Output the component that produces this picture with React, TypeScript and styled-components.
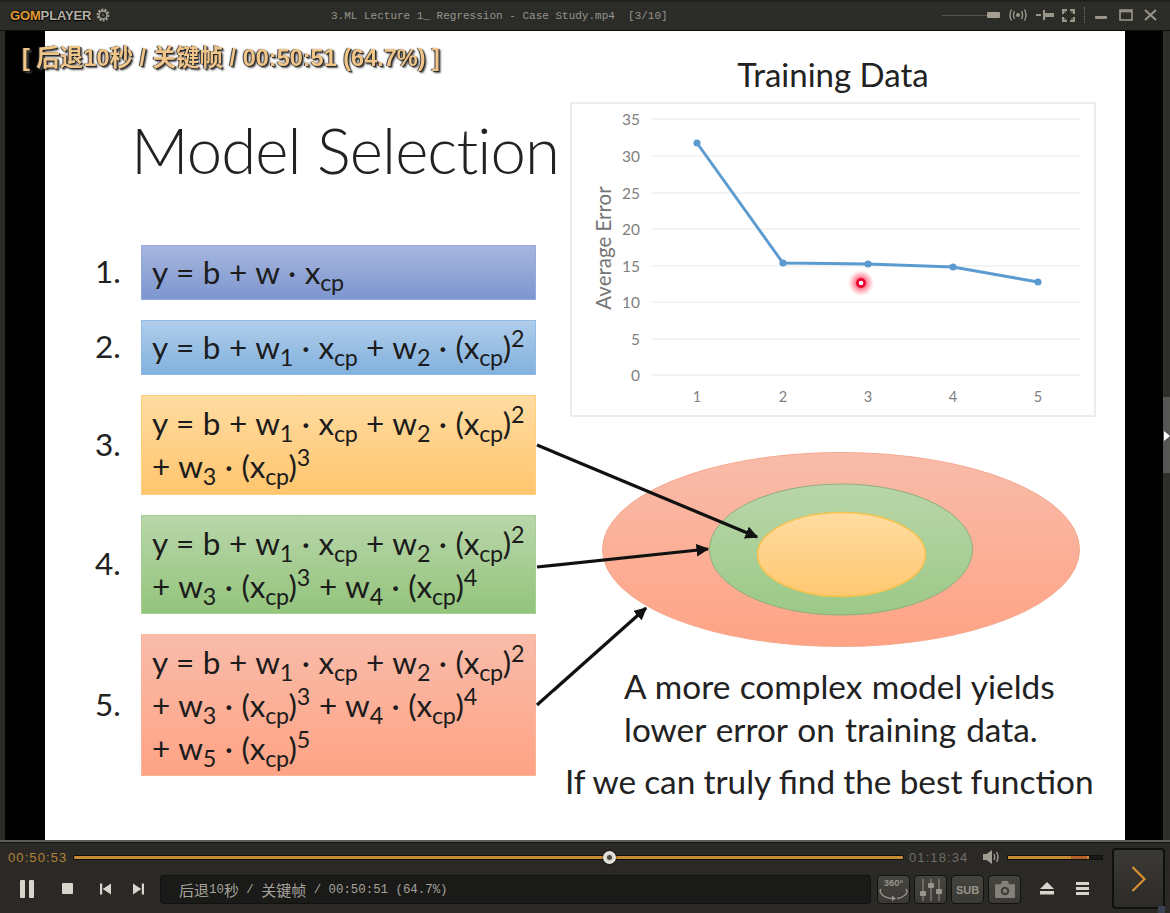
import React from "react";
import styled, { createGlobalStyle } from "styled-components";

const Global = createGlobalStyle`
  html, body { margin: 0; padding: 0; background: #2a2a26; }
  #root { width: 1170px; height: 913px; overflow: hidden; }
`;

const Window = styled.div`
  width: 1170px; height: 913px; display: flex; flex-direction: column;
  background: #2a2a26; position: relative; overflow: hidden;
  font-family: "Liberation Sans", "Noto Sans CJK SC", sans-serif;
`;

/* ---------- title bar ---------- */
const TitleBar = styled.header`
  height: 30px; flex: none; display: flex; align-items: center; padding: 0 13px 0 10px;
  background: linear-gradient(#1d1d1b 0, #2c2c28 3px, #2b2b27 100%);
  border-bottom: 1px solid #0c0c0b; box-sizing: content-box;
`;
const Logo = styled.div`
  width: 321px; display: flex; align-items: center; gap: 5px; flex: none;
  font: bold 13px "Liberation Sans", sans-serif; letter-spacing: -0.15px; color: #b5b0a5;
  text-shadow: 0 0 2px #000, 0 1px 1px #000;
  b { color: #e39a33; }
`;
const Title = styled.div`
  flex: 1; font: 11px "Liberation Mono", "Noto Sans CJK SC", monospace; color: #96948e; white-space: pre; padding-top: 2px;
`;
const TitleTools = styled.div`display: flex; align-items: center; gap: 8px; color: #9b968a;`;
const WinSlider = styled.div`
  width: 58px; height: 6px; display: flex; align-items: center;
  &::before { content: ""; flex: 1; height: 1px; background: #55534d; }
  &::after { content: ""; width: 13px; height: 6px; background: #a59f92; border-radius: 1px; }
`;
const Dots = styled.div`width: 0; height: 16px; border-left: 1px dotted #77736a; margin: 0 1px 0 1px;`;
const WinButtons = styled.div`display: flex; align-items: center; gap: 11px;`;

/* ---------- video ---------- */
const VideoRow = styled.main`flex: 1; min-height: 0; display: flex; padding-left: 5px;`;
const Video = styled.div`flex: 1; background: #000; display: flex; justify-content: center;`;
const Slide = styled.div`
  width: 1080px; background: #fff; display: flex; position: relative; margin-left: 2px;
  color: #1c1c1c; font-family: Lato, "Liberation Sans", sans-serif; filter: blur(0.4px);
`;
const RightEdge = styled.div`
  width: 7px; flex: none; background: #2e2e2a; display: flex; flex-direction: column; padding-top: 366px;
  position: relative; box-sizing: border-box;
`;
const EdgeThumb = styled.div`height: 76px; background: #565654;`;
const Cursor = styled.svg`position: absolute; right: 0; top: 400px;`;
const Osd = styled.div`
  position: absolute; left: -23px; top: 8px; white-space: pre; z-index: 1;
  font: bold 23.5px "Liberation Sans", "Noto Sans CJK SC", sans-serif; color: #f0c58a;
  text-shadow: 1px 1px 1px #222, -1px 0 1px #333, 2px 2px 2px #555;
`;

const LeftCol = styled.section`width: 520px; flex: none; padding-left: 50px; box-sizing: border-box;`;
const SlideTitle = styled.h1`
  margin: 84px 0 60px 36px; font: 300 63.5px/70px Lato, sans-serif; letter-spacing: -0.9px; color: #222; white-space: nowrap;
`;
const Models = styled.div`display: flex; flex-direction: column; gap: 20px;`;
const ModelRow = styled.div`display: flex; align-items: center;`;
const Num = styled.div`width: 46px; font-size: 31.5px; flex: none; color: #222; margin-top: -3px;`;
const Box = styled.div<{ $h: number; $top: string; $bottom: string; $edge: string }>`
  width: 395px; height: ${p => p.$h}px; flex: none; box-sizing: border-box; padding-left: 10px;
  display: flex; flex-direction: column; justify-content: center;
  background: linear-gradient(${p => p.$top}, ${p => p.$bottom}); border: 1px solid ${p => p.$edge};
`;
const FLine = styled.div`font-size: 31.5px; line-height: 43px; height: 43px; white-space: pre; letter-spacing: -0.15px; word-spacing: 0.8px;`;
const Sub = styled.sub`font-size: 0.74em; line-height: 0; vertical-align: -0.32em; letter-spacing: -0.4px;`;
const Sup = styled.sup`font-size: 0.74em; line-height: 0; vertical-align: 0.52em;`;

const RightCol = styled.section`flex: 1; padding-top: 23px; display: flex; flex-direction: column; align-items: flex-start;`;
const ChartHeading = styled.h2`
  margin: 0 0 8px 5px; width: 526px; text-align: center; font: 400 33px/40px Lato, sans-serif; color: #222;
`;
const ChartPanel = styled.div`
  margin-left: 5px; width: 526px; height: 315px; box-sizing: border-box; border: 2px solid #ececec; background: #fff;
  svg { display: block; margin: -2px; }
`;
const Diagram = styled.svg`margin: 35px 0 18px 36px; display: block; flex: none;`;
const Caption = styled.p<{ $left: number; $gap?: number; $ws: number }>`
  margin: ${p => p.$gap ?? 0}px 0 0 ${p => p.$left}px; font-size: 33.4px; line-height: 43px; white-space: nowrap; color: #222;
  word-spacing: ${p => p.$ws}px;
`;
const Arrows = styled.svg`position: absolute; inset: 0; pointer-events: none;`;

/* ---------- controls ---------- */
const Controls = styled.footer`
  height: 73px; flex: none; display: flex; box-sizing: border-box; padding: 4px 5px 5px 8px; gap: 9px; position: relative;
  background: #2a2925; border-top: 2px solid #5a5a56; box-shadow: inset 0 1px 0 #111;
`;
const Main = styled.div`flex: 1; min-width: 0; display: flex; flex-direction: column;`;
const SeekRow = styled.div`height: 22px; display: flex; align-items: center; margin-bottom: 7px;`;
const Time = styled.span<{ $c: string }>`
  font: 13px "Liberation Sans", sans-serif; letter-spacing: 1.1px; color: ${p => p.$c}; flex: none; width: 65px;
`;
const Track = styled.div`
  flex: 1; height: 3px; background: #c98a35; border: 1px solid #0f0f0e; border-radius: 2px; position: relative; margin-right: 5px;
`;
const Thumb = styled.div`
  position: absolute; top: -5px; width: 9px; height: 9px; margin-left: -6px; border-radius: 50%;
  background: #d9d6cf; border: 2px solid #e8e6e0; box-sizing: content-box; box-shadow: 0 0 2px #000;
  &::after { content: ""; display: block; width: 5px; height: 5px; margin: 2px; border-radius: 50%; background: #4a4a46; }
`;
const VolIcon = styled.svg`flex: none; margin: 0 7px 0 9px;`;
const VolTrack = styled.div`
  width: 96px; flex: none; background: linear-gradient(90deg, #c98a35 0 67%, #b4622a 67% 84%, #c98a35 84% 86%, #181816 86%);
  border: 1px solid #0f0f0e; box-sizing: border-box; height: 5px;
`;
const ButtonRow = styled.div`height: 29px; display: flex; align-items: center; color: #d8d5cc;`;
const Transport = styled.div`width: 152px; flex: none; display: flex; align-items: center; padding: 0 0 2px 12px; box-sizing: border-box; gap: 27px;`;
const SkipPair = styled.div`display: flex; align-items: center; gap: 22px;`;
const Status = styled.div`
  width: 711px; height: 29px; flex: none; box-sizing: border-box; padding-left: 18px; display: flex; align-items: center;
  background: #1a1a18; border: 1px solid #111; border-radius: 3px; color: #a5a39b;
  font: 12.4px "Liberation Mono", monospace; white-space: pre;
`;
const Cjk = styled.span`font: 15px "Noto Sans CJK SC", sans-serif;`;
const Tools = styled.div`display: flex; margin-left: 6px; gap: 4px;`;
const ToolButton = styled.div`
  width: 33px; height: 29px; box-sizing: border-box; border: 1px solid #121211; border-radius: 4px; background: linear-gradient(#45443f, #3a3935);
  display: flex; flex-direction: column; align-items: center; justify-content: center; color: #98948a; position: relative;
`;
const TinyLabel = styled.span<{ $size: number }>`font: bold ${p => p.$size}px/10px "Liberation Sans", sans-serif;`;
const RightIcons = styled.div`display: flex; align-items: center; gap: 22px; margin: 0 0 2px 19px;`;
const NextButton = styled.div`
  width: 53px; height: 61px; flex: none; box-sizing: border-box; border: 2px solid #0f0f0e; border-radius: 4px; align-self: flex-start;
  background: linear-gradient(#3a3934, #2c2b27); display: flex; align-items: center; justify-content: center; margin-top: 2px;
`;
const Corner = styled.div`position: absolute; right: 5px; bottom: 0; width: 7px; height: 7px; background: #3a4252;`;

/* ---------- slide data ---------- */
const L1 = <>y = b + w · x<Sub>cp</Sub></>;
const L2 = <>y = b + w<Sub>1</Sub> · x<Sub>cp</Sub> + w<Sub>2</Sub> · (x<Sub>cp</Sub>)<Sup>2</Sup></>;
const W3 = <>+ w<Sub>3</Sub> · (x<Sub>cp</Sub>)<Sup>3</Sup></>;
const W4 = <>{W3} + w<Sub>4</Sub> · (x<Sub>cp</Sub>)<Sup>4</Sup></>;
const W5 = <>+ w<Sub>5</Sub> · (x<Sub>cp</Sub>)<Sup>5</Sup></>;

const models = [
  { n: "1.", h: 55, top: "#a7b6de", bottom: "#7d96cf", edge: "#93abdc", lines: [L1] },
  { n: "2.", h: 55, top: "#b0cdea", bottom: "#82b1de", edge: "#8fbae3", lines: [L2] },
  { n: "3.", h: 100, top: "#ffdca1", bottom: "#ffc56e", edge: "#ffcf80", lines: [L2, W3] },
  { n: "4.", h: 99, top: "#b9d6aa", bottom: "#93c47c", edge: "#a6cf94", lines: [L2, W4] },
  { n: "5.", h: 142, top: "#f8bcaa", bottom: "#ffa385", edge: "#fbb49c", lines: [L2, W4, W5] },
];

const gridY = [[35, 119], [30, 156], [25, 193], [20, 229], [15, 266], [10, 302], [5, 339], [0, 375]];
const pts = [[697, 143], [783, 263], [868, 264], [953, 267], [1038, 282]];

const Chart = () => (
  <svg width={526} height={315} viewBox="570 102 526 315">
    <defs>
      <radialGradient id="glow">
        <stop offset="0.35" stopColor="#ff3b5c" stopOpacity="0.75" />
        <stop offset="1" stopColor="#ff6b80" stopOpacity="0" />
      </radialGradient>
    </defs>
    {gridY.map(([v, y]) => (
      <g key={v}>
        <line x1={651} x2={1081} y1={y} y2={y} stroke="#e9e9e9" strokeWidth={1.2} />
        <text x={640} y={y + 5.5} textAnchor="end" fontSize={15.5} fill="#7f7f7f" fontFamily="Lato, sans-serif">{v}</text>
      </g>
    ))}
    {pts.map(([x], i) => (
      <text key={i} x={x} y={402} textAnchor="middle" fontSize={14.5} fill="#7f7f7f" fontFamily="Lato, sans-serif">{i + 1}</text>
    ))}
    <text transform="translate(611 248) rotate(-90)" textAnchor="middle" fontSize={20.5} fill="#757575" fontFamily="Lato, sans-serif">Average Error</text>
    <polyline points={pts.map(p => p.join(",")).join(" ")} fill="none" stroke="#5b9bd0" strokeWidth={3} />
    {pts.map(([x, y]) => <circle key={x} cx={x} cy={y} r={3.6} fill="#5b9bd0" />)}
    <circle cx={861} cy={283} r={13} fill="url(#glow)" />
    <circle cx={861} cy={283} r={3.6} fill="#fff" stroke="#e8002c" strokeWidth={2.6} />
  </svg>
);

const Ellipses = () => (
  <Diagram width={480} height={195} viewBox="601 452 480 195">
    <defs>
      <linearGradient id="eo" x1="0" y1="0" x2="0" y2="1"><stop offset="0" stopColor="#f8bcaa" /><stop offset="1" stopColor="#ffa385" /></linearGradient>
      <linearGradient id="em" x1="0" y1="0" x2="0" y2="1"><stop offset="0" stopColor="#b9d6aa" /><stop offset="1" stopColor="#9cc987" /></linearGradient>
      <linearGradient id="ei" x1="0" y1="0" x2="0" y2="1"><stop offset="0" stopColor="#ffdca1" /><stop offset="1" stopColor="#ffc871" /></linearGradient>
    </defs>
    <ellipse cx={841} cy={549.5} rx={238.5} ry={97} fill="url(#eo)" stroke="#f5a98e" />
    <ellipse cx={841} cy={549.5} rx={131.5} ry={65.5} fill="url(#em)" stroke="#8fae7c" />
    <ellipse cx={841.5} cy={554.5} rx={84} ry={42} fill="url(#ei)" stroke="#f8c24a" strokeWidth={1.4} />
  </Diagram>
);

const ArrowOverlay = () => (
  <Arrows width={1080} height={809} viewBox="45 31 1080 809">
    <defs>
      <marker id="head" markerWidth="4" markerHeight="4" refX="3.6" refY="2" orient="auto">
        <path d="M0 0 L4 2 L0 4 Z" fill="#111" />
      </marker>
    </defs>
    <line x1={537} y1={445} x2={757} y2={537} stroke="#111" strokeWidth={3.2} markerEnd="url(#head)" />
    <line x1={537} y1={567} x2={708} y2={549} stroke="#111" strokeWidth={3.2} markerEnd="url(#head)" />
    <line x1={537} y1={705} x2={646} y2={608} stroke="#111" strokeWidth={3.2} markerEnd="url(#head)" />
  </Arrows>
);

/* ---------- icons ---------- */
const Gear = () => (
  <svg width={14} height={14} viewBox="0 0 14 14">
    <circle cx={7} cy={7} r={5.4} fill="none" stroke="#a6a297" strokeWidth={2} strokeDasharray="2 1.3" />
    <circle cx={7} cy={7} r={4} fill="none" stroke="#a6a297" strokeWidth={1.4} />
    <circle cx={7} cy={7} r={1.2} fill="#555" />
  </svg>
);
const Broadcast = () => (
  <svg width={20} height={14} viewBox="0 0 20 14" fill="none" stroke="currentColor" strokeWidth={1.4}>
    <circle cx={10} cy={7} r={2} fill="currentColor" stroke="none" />
    <path d="M6.5 3 Q4.5 7 6.5 11 M13.5 3 Q15.5 7 13.5 11 M3.5 1.5 Q0.5 7 3.5 12.5 M16.5 1.5 Q19.5 7 16.5 12.5" />
  </svg>
);
const Pin = () => (
  <svg width={18} height={12} viewBox="0 0 18 12" fill="currentColor">
    <path d="M0 5h5v2H0zM7 1h2v3h9v4H9v3H7z" />
  </svg>
);
const Corners = () => (
  <svg width={13} height={13} viewBox="0 0 13 13" fill="currentColor">
    <path d="M0 0h5v2H2v3H0zM8 0h5v5h-2V2H8zM0 8h2v3h3v2H0zM11 8h2v5H8v-2h3z" />
    <rect x={1} y={1} width={3} height={3} opacity={0.5} /><rect x={9} y={1} width={3} height={3} opacity={0.5} />
    <rect x={1} y={9} width={3} height={3} opacity={0.5} /><rect x={9} y={9} width={3} height={3} opacity={0.5} />
  </svg>
);
const Minimize = () => <svg width={14} height={14} viewBox="0 0 14 14" fill="currentColor"><rect x={1} y={8} width={12} height={3} rx={1} /></svg>;
const Maximize = () => <svg width={14} height={12} viewBox="0 0 14 12" fill="none" stroke="currentColor"><rect x={1} y={1} width={12} height={10} strokeWidth={1.6} /><path d="M1 2.5h12" strokeWidth={1.6} /></svg>;
const Close = () => <svg width={13} height={12} viewBox="0 0 13 12" fill="none" stroke="currentColor" strokeWidth={2}><path d="M1 1l11 10M12 1L1 11" /></svg>;
const Pause = () => <svg width={15} height={18} viewBox="0 0 15 18" fill="currentColor"><rect x={0} width={5} height={18} rx={1} /><rect x={9} width={5} height={18} rx={1} /></svg>;
const Stop = () => <svg width={11} height={11} viewBox="0 0 11 11" fill="currentColor"><rect width={11} height={11} rx={1} /></svg>;
const Prev = () => <svg width={11} height={12} viewBox="0 0 12 12" fill="currentColor"><path d="M0 0h2.4v12H0zM12 0v12L3 6z" /></svg>;
const Next = () => <svg width={11} height={12} viewBox="0 0 12 12" fill="currentColor"><path d="M12 0H9.6v12H12zM0 0v12l9-6z" /></svg>;
const Speaker = () => (
  <VolIcon width={17} height={14} viewBox="0 0 17 14" fill="none" stroke="#a09c92">
    <path d="M0 4h3.5L9 0v14L3.500 10H0z" fill="#a09c92" stroke="none" />
    <path d="M11 4q1.500 3 0 6M13.500 2q3 5 0 10" strokeWidth={1.4} />
  </VolIcon>
);
const Orbit = () => (
  <svg width={31} height={13} viewBox="0 0 31 13" fill="none" stroke="currentColor" strokeWidth={1.4}>
    <path d="M3 1C0 5 6 10 14 10.500" />
    <path d="M28 1c3 4-2 8.500-9 9.500" />
    <path d="M14 7.500l4 3-4 2.500z" fill="currentColor" stroke="none" />
  </svg>
);
const Faders = () => (
  <svg width={24} height={22} viewBox="0 0 24 22" fill="currentColor">
    <rect x={3.5} width={1} height={22} /><rect x={11.500} width={1} height={22} /><rect x={19.500} width={1} height={22} />
    <rect x={1} y={12} width={6} height={5} rx={1} /><rect x={9} y={4} width={6} height={5} rx={1} /><rect x={17} y={10} width={6} height={5} rx={1} />
  </svg>
);
const Camera = () => (
  <svg width={20} height={17} viewBox="0 0 21 18">
    <path d="M0 3.500h6L7.500 0h6L15 3.500h6V18H0z" fill="#85817a" />
    <circle cx={10.500} cy={10.500} r={4.500} fill="#3f3e39" />
    <circle cx={10.500} cy={10.500} r={2.200} fill="#85817a" />
  </svg>
);
const Eject = () => <svg width={14} height={13} viewBox="0 0 14 13" fill="currentColor"><path d="M7 0l7 7H0z" /><rect y={9} width={14} height={3.500} /></svg>;
const Menu = () => <svg width={13} height={13} viewBox="0 0 13 13" fill="currentColor"><rect width={13} height={3} /><rect y={5} width={13} height={3} /><rect y={10} width={13} height={3} /></svg>;
const Chevron = () => <svg width={15} height={26} viewBox="0 0 15 26" fill="none" stroke="#d88f30" strokeWidth={2.2}><path d="M1.500 1l12 12-12 12" /></svg>;

export default function App() {
  return (
    <Window>
      <Global />
      <TitleBar>
        <Logo><span><b>GOM</b>PLAYER</span><Gear /></Logo>
        <Title>{"3.ML Lecture 1_ Regression - Case Study.mp4  [3/10]"}</Title>
        <TitleTools>
          <WinSlider />
          <Broadcast /><Pin /><Corners />
          <Dots />
          <WinButtons><Minimize /><Maximize /><Close /></WinButtons>
        </TitleTools>
      </TitleBar>

      <VideoRow>
        <Video>
          <Slide>
            <Osd>[ 后退10秒 / 关键帧 / 00:50:51 (64.7%) ]</Osd>
            <LeftCol>
              <SlideTitle>Model Selection</SlideTitle>
              <Models>
                {models.map(m => (
                  <ModelRow key={m.n}>
                    <Num>{m.n}</Num>
                    <Box $h={m.h} $top={m.top} $bottom={m.bottom} $edge={m.edge}>
                      {m.lines.map((l, i) => <FLine key={i}>{l}</FLine>)}
                    </Box>
                  </ModelRow>
                ))}
              </Models>
            </LeftCol>
            <RightCol>
              <ChartHeading>Training Data</ChartHeading>
              <ChartPanel><Chart /></ChartPanel>
              <Ellipses />
              <Caption $left={59} $ws={0.8}>A more complex model yields</Caption>
              <Caption $left={59} $ws={1.5}>lower error on training data.</Caption>
              <Caption $left={0} $gap={9} $ws={-0.4}>If we can truly find the best function</Caption>
            </RightCol>
            <ArrowOverlay />
          </Slide>
        </Video>
        <RightEdge>
          <EdgeThumb />
          <Cursor width={7} height={10} viewBox="0 0 7 10"><path d="M1 0l6 5-6 5z" fill="#fff" /></Cursor>
        </RightEdge>
      </VideoRow>

      <Controls>
        <Main>
          <SeekRow>
            <Time $c="#b58338">00:50:53</Time>
            <Track><Thumb style={{ left: `${((609 - 73) / 830) * 100}%` }} /></Track>
            <Time $c="#6f6d65">01:18:34</Time>
            <Speaker />
            <VolTrack />
          </SeekRow>
          <ButtonRow>
            <Transport><Pause /><Stop /><SkipPair><Prev /><Next /></SkipPair></Transport>
            <Status><Cjk>后退</Cjk>10<Cjk>秒</Cjk>{" / "}<Cjk>关键帧</Cjk>{" / 00:50:51 (64.7%)"}</Status>
            <Tools>
              <ToolButton><TinyLabel $size={9.5}>360°</TinyLabel><Orbit /></ToolButton>
              <ToolButton><Faders /></ToolButton>
              <ToolButton><TinyLabel $size={11}>SUB</TinyLabel></ToolButton>
              <ToolButton><Camera /></ToolButton>
            </Tools>
            <RightIcons><Eject /><Menu /></RightIcons>
          </ButtonRow>
        </Main>
        <NextButton><Chevron /></NextButton>
        <Corner />
      </Controls>
    </Window>
  );
}
